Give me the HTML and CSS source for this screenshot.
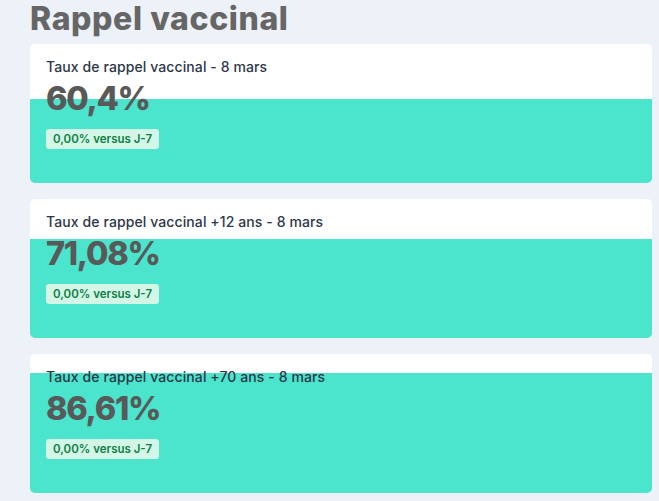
FILE: index.html
```html
<!DOCTYPE html>
<html lang="fr">
<head>
<meta charset="utf-8">
<title>Rappel vaccinal</title>
<link rel="stylesheet" href="styles.css">
</head>
<body>
<main class="page">
  <h1 class="page-title">Rappel vaccinal</h1>
  <section class="cards">
    <article class="card" style="--fill: 60.4%">
      <p class="card-label">Taux de rappel vaccinal - 8 mars</p>
      <p class="card-value">60,4%</p>
      <span class="badge">0,00% versus J-7</span>
    </article>
    <article class="card" style="--fill: 71.08%">
      <p class="card-label">Taux de rappel vaccinal +12 ans - 8 mars</p>
      <p class="card-value">71,08%</p>
      <span class="badge">0,00% versus J-7</span>
    </article>
    <article class="card" style="--fill: 86.61%">
      <p class="card-label">Taux de rappel vaccinal +70 ans - 8 mars</p>
      <p class="card-value">86,61%</p>
      <span class="badge">0,00% versus J-7</span>
    </article>
  </section>
</main>
</body>
</html>
```
FILE: styles.css
```css
* { box-sizing: border-box; }

html, body {
  margin: 0;
  padding: 0;
}

body {
  background: #edf1f8;
  font-family: Inter, "Noto Sans", "Liberation Sans", sans-serif;
}

.page {
  padding: 0 7px 0 30px;
}

.page-title {
  margin: 0 0 6px 0;
  font-size: 32px;
  line-height: 38px;
  font-weight: 800;
  color: #666666;
  letter-spacing: 0.6px;
}

.cards {
  display: flex;
  flex-direction: column;
  gap: 16px;
}

.card {
  --fill: 0%;
  display: flex;
  flex-direction: column;
  align-items: flex-start;
  border-radius: 5px;
  padding: 13px 16px 34px 16px;
  background: linear-gradient(to top, #4ae5cc var(--fill), #ffffff var(--fill));
}

.card-label {
  margin: 0;
  font-size: 14px;
  line-height: 20px;
  font-weight: 500;
  color: #2d3748;
  letter-spacing: 0.1px;
}

.card-value {
  margin: 2px 0 10px 0;
  font-size: 32.5px;
  line-height: 40px;
  font-weight: 800;
  color: #595959;
  letter-spacing: -1.3px;
}

.badge {
  display: block;
  height: 20px;
  line-height: 20px;
  padding: 0 7px;
  border-radius: 3px;
  background: #d3f6e6;
  color: #0c7f47;
  font-size: 11.5px;
  font-weight: 600;
}
```
